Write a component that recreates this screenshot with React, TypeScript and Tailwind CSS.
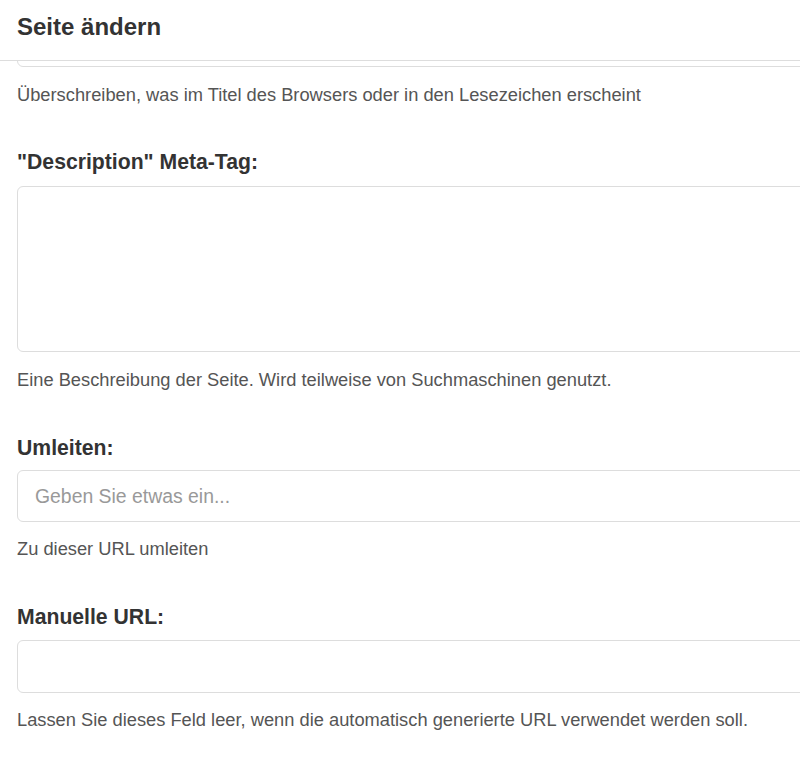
import { ReactNode } from 'react';

function Help({ children, className = '' }: { children: ReactNode; className?: string }) {
  return <p className={`text-[18.3px] leading-[27px] text-[#555] ${className}`}>{children}</p>;
}

function Label({ children, className = '' }: { children: ReactNode; className?: string }) {
  return <label className={`block text-[21.2px] leading-[30px] font-bold text-[#333] ${className}`}>{children}</label>;
}

export default function App() {
  return (
    <div className="w-[800px] h-[767px] overflow-hidden bg-white font-['Liberation_Sans',Arial,sans-serif]">
      <div className="h-[61px] border-b border-[#ddd] px-[17px] pt-[9px]">
        <h1 className="text-[24px] leading-[36px] font-bold text-[#333]">Seite ändern</h1>
      </div>

      <div className="pl-[17px]">
        {/* bottom of the title input, scrolled under the header */}
        <div className="h-[6px] overflow-hidden">
          <div className="-mt-[46px] h-[52px] w-[800px] border border-[#ddd] rounded-[6px]" />
        </div>
        <Help className="mt-[14px]">Überschreiben, was im Titel des Browsers oder in den Lesezeichen erscheint</Help>

        <Label className="mt-[39px] mb-[9px]">"Description" Meta-Tag:</Label>
        <textarea className="block h-[166px] w-[800px] resize-none border border-[#ddd] rounded-[6px] outline-none" />
        <Help className="mt-[14px]">Eine Beschreibung der Seite. Wird teilweise von Suchmaschinen genutzt.</Help>

        <Label className="mt-[40px] mb-[7px]">Umleiten:</Label>
        <input
          type="text"
          placeholder="Geben Sie etwas ein..."
          className="block h-[52px] w-[800px] border border-[#ddd] rounded-[6px] px-[17px] text-[19.4px] text-[#333] placeholder:text-[#999] outline-none"
        />
        <Help className="mt-[13px]">Zu dieser URL umleiten</Help>

        <Label className="mt-[40px] mb-[8px]">Manuelle URL:</Label>
        <input
          type="text"
          className="block h-[53px] w-[800px] border border-[#ddd] rounded-[6px] px-[17px] text-[19.4px] text-[#333] outline-none"
        />
        <Help className="mt-[13px]">Lassen Sie dieses Feld leer, wenn die automatisch generierte URL verwendet werden soll.</Help>
      </div>
    </div>
  );
}
